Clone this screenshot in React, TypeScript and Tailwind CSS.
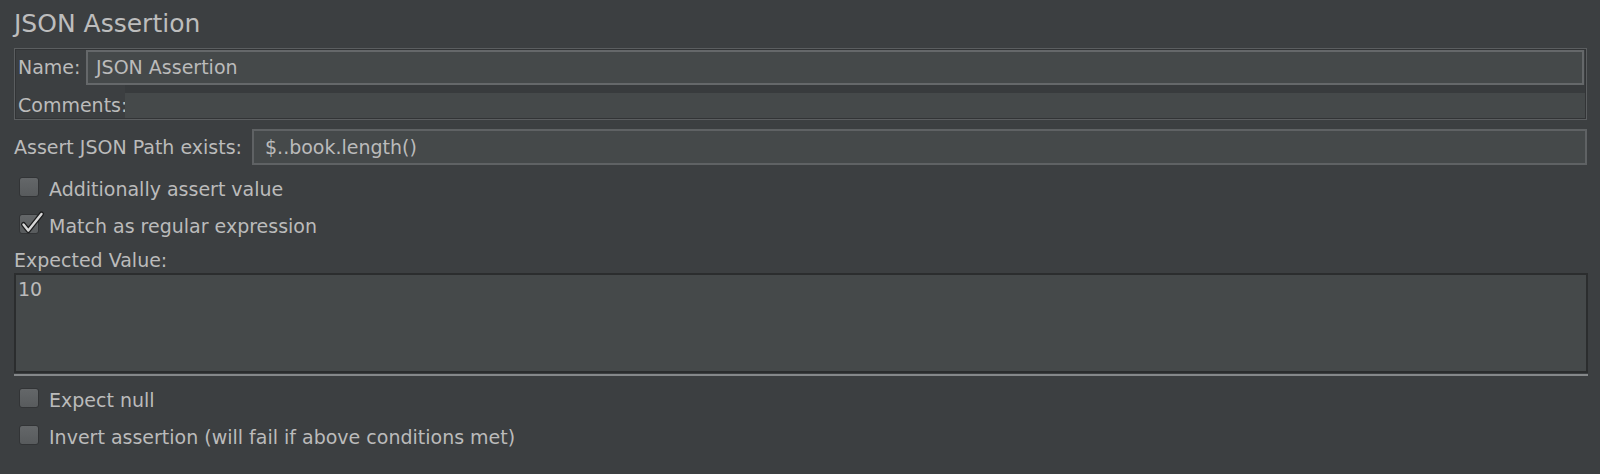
import type { ReactNode } from 'react';

const FONT = { fontFamily: '"DejaVu Sans", "Liberation Sans", sans-serif' };

function CheckBox({ checked }: { checked?: boolean }) {
  return (
    <div className="relative mt-[8px] ml-[5px] h-[20px] w-[20px] shrink-0 rounded-[3px] border border-[#323436] bg-gradient-to-b from-[#646769] to-[#585b5d]">
      {checked ? (
        <svg
          className="absolute left-[-1px] top-[-1px] overflow-visible"
          width="20"
          height="20"
          viewBox="0 0 20 20"
          fill="none"
        >
          <polyline
            points="4.5,10.5 9.3,16.5 22.5,0"
            stroke="#1c1d1e"
            strokeWidth="5"
            strokeLinecap="round"
            strokeLinejoin="round"
          />
          <polyline
            points="4.5,10.5 9.3,16.5 22.5,0"
            stroke="#d8d8d8"
            strokeWidth="2.4"
            strokeLinecap="round"
            strokeLinejoin="round"
          />
        </svg>
      ) : null}
    </div>
  );
}

function CheckRow({ checked, children }: { checked?: boolean; children: ReactNode }) {
  return (
    <div className="flex h-[37px] items-start">
      <CheckBox checked={checked} />
      <span className="ml-[10px] mt-[9px] text-[19px] leading-[22px] text-[#bbbbbb]">{children}</span>
    </div>
  );
}

export default function App() {
  return (
    <div className="h-[474px] w-[1600px] overflow-hidden bg-[#3c3f41] pl-[14px] pr-[12px] text-[#bbbbbb]" style={FONT}>
      <div className="pt-[9px] text-[25px] leading-[30px] text-[#bdbdbd]">JSON Assertion</div>

      {/* name / comments panel */}
      <div className="mr-[1px] mt-[9px] h-[72px] border border-[#5b5e60] p-[1px] shadow-[inset_0_0_0_1px_#323436]">
        <div className="flex h-[35px] items-stretch pr-[1px]">
          <span className="ml-[2px] w-[68px] text-[19px] leading-[35px]">Name:</span>
          <div className="flex-1 border-2 border-[#65686a] bg-[#45494a] pl-[8px] text-[19px] leading-[31px]">
            JSON Assertion
          </div>
        </div>
        <div className="flex h-[33px] items-end">
          <span className="ml-[2px] w-[107px] text-[19px] leading-[25px]">Comments:</span>
          <div className="flex h-[33px] flex-1 flex-col">
            <div className="h-[8px] bg-[#383b3d]" />
            <div className="flex-1 bg-[#45494a]" />
          </div>
        </div>
      </div>

      {/* json path */}
      <div className="mr-[1px] mt-[9px] flex h-[36px] items-stretch">
        <span className="w-[238px] text-[19px] leading-[36px]">Assert JSON Path exists:</span>
        <div className="flex-1 border-2 border-[#5f6264] bg-[#45494a] pl-[11px] text-[19px] leading-[32px]">
          $..book.length()
        </div>
      </div>

      <div className="mt-[4px]">
        <CheckRow>Additionally assert value</CheckRow>
        <CheckRow checked>Match as regular expression</CheckRow>
      </div>

      <div className="mt-[6px] text-[19px] leading-[22px]">Expected Value:</div>
      <div className="mt-[2px] h-[100px] border-2 border-[#2b2d2e] bg-[#45494a] pl-[2px] pt-[3px] text-[19px] leading-[22px]">
        10
      </div>
      <div className="mt-[1px] h-[2px] bg-[#85888a]" />

      <div className="mt-[4px]">
        <CheckRow>Expect null</CheckRow>
        <CheckRow>Invert assertion (will fail if above conditions met)</CheckRow>
      </div>
    </div>
  );
}
